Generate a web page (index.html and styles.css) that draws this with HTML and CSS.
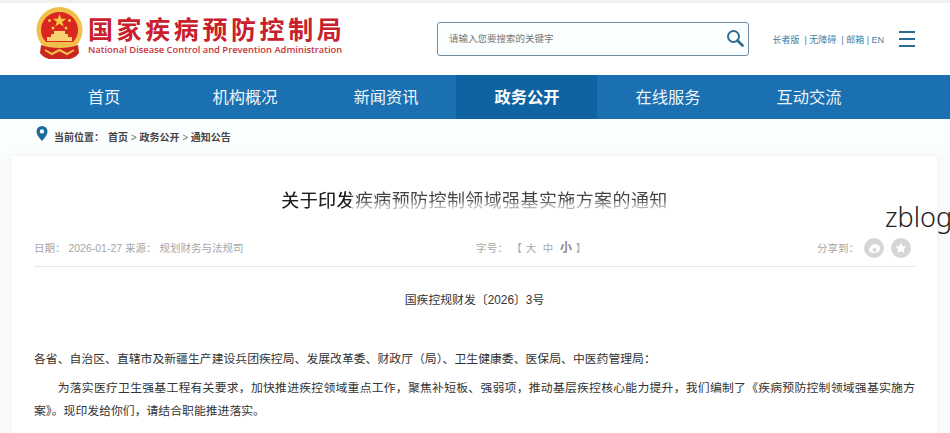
FILE: index.html
```html
<!DOCTYPE html>
<html lang="zh-CN">
<head>
    <meta charset="UTF-8"/>
    <title>关于印发疾病预防控制领域强基实施方案的通知</title>
    <link rel="stylesheet" href="styles.css">
</head>
<body>
<div class="top-line"></div>
<header class="header">
    <div class="logo">
        <svg class="emblem" width="49" height="52" viewBox="0 0 49 52">
            <circle cx="24.500" cy="23" r="23" fill="#f2c04a"/>
            <path d="M24.500 5C14 5 6 13 6 23c0 5 2 9 5 12h27c3-3 5-7 5-12C43 13 35 5 24.500 5z" fill="#d9261f"/>
            <polygon points="24.500,7 26.200,11.800 31.300,11.800 27.200,14.800 28.700,19.600 24.500,16.700 20.300,19.600 21.800,14.800 17.700,11.800 22.800,11.800" fill="#f6c844"/>
            <circle cx="14.500" cy="13.500" r="1.500" fill="#f6c844"/>
            <circle cx="18" cy="21" r="1.500" fill="#f6c844"/>
            <circle cx="31" cy="21" r="1.500" fill="#f6c844"/>
            <circle cx="34.500" cy="13.500" r="1.500" fill="#f6c844"/>
            <path d="M19 24h11v3h3v3h4v4H12v-4h4v-3h3z" fill="#f6d271"/>
            <path d="M10 35h29v4H10z" fill="#f2c04a"/>
            <path d="M6 38c5 2 12 3 18.500 3S38 40 43 38l1 8c-2 3-5 5-9 6H14c-4-1-7-3-9-6z" fill="#c9261f"/>
            <path d="M10 43l7 4 7.500-4 7.500 4 7-4" fill="none" stroke="#f2c04a" stroke-width="2"/>
        </svg>
        <div class="logo-text">
            <div class="logo-cn">国家疾病预防控制局</div>
            <div class="logo-en">National Disease Control and Prevention Administration</div>
        </div>
    </div>
    <div class="search">
        <span class="search-hint">请输入您要搜索的关键字</span>
        <svg width="18" height="18" viewBox="0 0 18 18">
            <circle cx="7.500" cy="7.500" r="5.500" fill="none" stroke="#2d6a94" stroke-width="2"/>
            <path d="M11.500 11.500l5 5" stroke="#2d6a94" stroke-width="2.600" stroke-linecap="round"/>
        </svg>
    </div>
    <div class="links">长者版 &nbsp;| 无障碍 &nbsp;| 邮箱 | EN</div>
    <div class="burger"><span></span><span></span><span></span></div>
</header>

<nav class="nav">
    <a>首页</a>
    <a>机构概况</a>
    <a>新闻资讯</a>
    <a class="active">政务公开</a>
    <a>在线服务</a>
    <a>互动交流</a>
</nav>

<div class="crumbs">
    <svg width="12" height="15" viewBox="0 0 12 15">
        <path d="M6 0a5.500 5.500 0 0 0-5.500 5.500C.5 9.500 6 15 6 15s5.500-5.500 5.500-9.500A5.500 5.500 0 0 0 6 0zm0 7.600a2.200 2.200 0 1 1 0-4.400 2.200 2.200 0 0 1 0 4.400z" fill="#1c6a9c"/>
    </svg>
    <span class="crumbs-label">当前位置：</span>
    <span>首页 <i>&gt;</i> 政务公开 <i>&gt;</i> 通知公告</span>
</div>

<main class="card">
    <h1><span>关于印发疾病预防控制领域强基实施方案的通知</span></h1>
    <div class="meta">
        <div class="meta-left">日期： 2026-01-27 来源： 规划财务与法规司</div>
        <div class="meta-size">字号： 【 大 &nbsp;中 &nbsp;<b>小</b> 】</div>
        <div class="meta-share">
            <span class="share-label">分享到：</span>
            <span class="share-btn">
                <svg width="13" height="11" viewBox="0 0 13 11"><path d="M1 7c0-3 3.500-6 6.500-6C10 1 12 2.500 12 5.500 12 8.500 9.500 10 6.500 10S1 9.500 1 7zm3.500 0a2 2 0 1 0 4 0 2 2 0 0 0-4 0z" fill="#fff" fill-rule="evenodd"/></svg>
            </span>
            <span class="share-btn">
                <svg width="12" height="12" viewBox="0 0 12 12"><polygon points="6,.5 7.600,4.200 11.500,4.600 8.600,7.200 9.400,11.200 6,9.100 2.600,11.200 3.400,7.200 .5,4.600 4.400,4.200" fill="#fff"/></svg>
            </span>
        </div>
    </div>
    <div class="content">
        <p class="doc-no">国疾控规财发〔2026〕3号</p>
        <p class="to">各省、自治区、直辖市及新疆生产建设兵团疾控局、发展改革委、财政厅（局）、卫生健康委、医保局、中医药管理局：</p>
        <p class="para">为落实医疗卫生强基工程有关要求，加快推进疾控领域重点工作，聚焦补短板、强弱项，推动基层疾控核心能力提升，我们编制了《疾病预防控制领域强基实施方案》。现印发给你们，请结合职能推进落实。</p>
    </div>
</main>

<div class="watermark">zblog</div>
</body>
</html>
```

FILE: styles.css
```css
html, body {
    height: 433px;
    overflow: hidden;
}

body {
    margin: 0;
    background: #fafbfb;
    color: #333;
    font-family: "Liberation Sans", "Noto Sans CJK SC", sans-serif;
}

.top-line {
    height: 3px;
    background: #f0f0f0;
}

.header {
    height: 72px;
    background: #fff;
    display: flex;
    align-items: center;
    padding: 0 35px;
    box-sizing: border-box;
}

.logo {
    display: flex;
    align-items: center;
    width: 402px;
    flex-shrink: 0;
    gap: 4px;
    margin-top: -8px;
}

.emblem {
    margin-top: -4px;
    flex-shrink: 0;
}

.logo-cn {
    font-family: "Noto Sans CJK SC", sans-serif;
    font-size: 25px;
    font-weight: 700;
    line-height: 30px;
    letter-spacing: 3.600px;
    color: #c8202c;
}

.logo-en {
    font-family: "Open Sans", sans-serif;
    font-size: 9.400px;
    font-weight: 600;
    line-height: 14px;
    color: #c8343c;
    white-space: nowrap;
}

.search {
    width: 312px;
    height: 34px;
    box-sizing: border-box;
    border: 1px solid #6f8ea3;
    border-radius: 3px;
    background: #fbfefe;
    display: flex;
    align-items: center;
    justify-content: space-between;
    padding: 0 4px 2px 11px;
}

.search-hint {
    font-size: 9.500px;
    color: #777;
}

.links {
    margin-left: 24px;
    font-size: 9px;
    color: #3f7fa8;
    white-space: nowrap;
}

.burger {
    margin-left: 15px;
    display: flex;
    flex-direction: column;
    gap: 4.500px;
    width: 16px;
}

.burger span {
    height: 2.500px;
    background: #2b6c96;
}

.nav {
    height: 44px;
    background: #1a70b1;
    display: flex;
    padding-left: 33px;
}

.nav a {
    width: 141px;
    text-align: center;
    line-height: 44px;
    font-size: 16.300px;
    color: #eef5fa;
    padding-left: 1px;
    box-sizing: border-box;
}

.nav a.active {
    background: #0f63a0;
    font-weight: 700;
    color: #fff;
}

.crumbs {
    height: 35px;
    padding-left: 36px;
    box-sizing: border-box;
    display: flex;
    align-items: center;
    font-size: 10px;
    font-weight: 600;
    color: #444;
    background: #fbfefe;
}

.crumbs svg {
    margin: -7px 6px 0 0;
}

.crumbs i {
    font-style: normal;
    font-weight: 400;
    color: #777;
}

.crumbs-label {
    margin-right: 4px;
}

.card {
    margin: 2px 13px 0 12px;
    padding: 0 22px;
    background: #fff;
    box-shadow: 0 0 8px rgba(0, 0, 0, 0.05);
    height: 300px;
}

h1 {
    margin: 0;
    padding-top: 32px;
    text-align: center;
    font-size: 18px;
    font-weight: 400;
    line-height: 26px;
    letter-spacing: 0.400px;
}

/* title fades out in the lower half, left part stays dark */
h1 span {
    background:
        linear-gradient(#1f1f1f, #1f1f1f) left / 18% 100% no-repeat,
        linear-gradient(to bottom, #444 45%, #b5b5b5 75%);
    -webkit-background-clip: text;
    background-clip: text;
    color: transparent;
}

.meta {
    margin-top: 24px;
    height: 28px;
    border-bottom: 1px solid #e6e6e6;
    display: grid;
    grid-template-columns: 442px auto 1fr;
    align-items: start;
    font-size: 10.500px;
    color: #a6a6a6;
    line-height: 20px;
}

.meta-size {
    color: #aaa;
    letter-spacing: 0.300px;
}

.meta-size b {
    color: #888;
    font-size: 12px;
}

.meta-share {
    display: flex;
    justify-content: flex-end;
    align-items: center;
    gap: 7px;
    padding-right: 4px;
}

.share-label {
    margin-right: -2px;
}

.share-btn {
    width: 20px;
    height: 20px;
    border-radius: 50%;
    background: #d6d6d6;
    display: flex;
    align-items: center;
    justify-content: center;
}

.content {
    font-size: 11.850px;
    line-height: 23px;
    color: #333;
}

.content p {
    margin: 0;
}

.doc-no {
    padding-top: 22px;
    text-align: center;
}

.to {
    padding-top: 36px;
}

.para {
    padding-top: 6px;
    text-indent: 2em;
    text-align: justify;
}

.watermark {
    position: absolute;
    top: 200px;
    left: 885px;
    font-family: "Noto Sans", sans-serif;
    font-size: 27px;
    font-weight: 300;
    line-height: 34px;
    color: #222;
}
```
